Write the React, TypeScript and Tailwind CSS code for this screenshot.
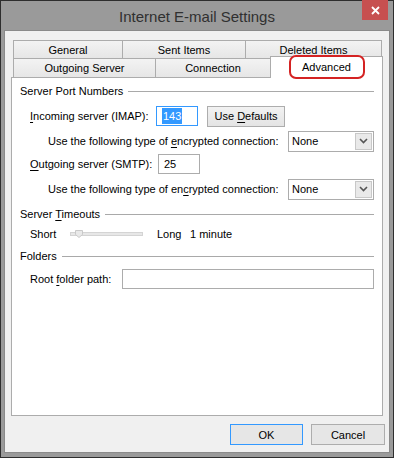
import React from "react";

function Section({ title, u, h }: { title: string; u?: [number, number]; h: string }) {
  return (
    <div className={`flex items-center pl-[8px] pr-[8px] ${h}`}>
      <span className="whitespace-nowrap">{renderU(title, u)}</span>
      <div className="flex-1 h-px bg-[#a9a9a9] ml-[5px]" />
    </div>
  );
}

function renderU(text: string, u?: [number, number]) {
  if (!u) return text;
  const [a, b] = u;
  return (
    <>
      {text.slice(0, a)}
      <span className="underline underline-offset-2">{text.slice(a, b)}</span>
      {text.slice(b)}
    </>
  );
}

function Select() {
  return (
    <div className="w-[86px] h-[21px] border border-[#acacac] bg-white flex items-center">
      <span className="pl-[3px] flex-1">None</span>
      <div className="w-[17px] h-[17px] mr-[1px] border border-[#c8c8c8] bg-[#e9e9e9] flex items-center justify-center">
        <svg width="9" height="6" viewBox="0 0 9 6">
          <path d="M1 1 L4.5 4.5 L8 1" stroke="#555" strokeWidth="1.6" fill="none" />
        </svg>
      </div>
    </div>
  );
}

function Tab({ label, w, extra = "" }: { label: string; w: string; extra?: string }) {
  return (
    <div
      className={`${w} h-full border-t border-l border-r border-[#acacac] bg-gradient-to-b from-[#f3f3f3] to-[#e6e6e6] flex items-center justify-center ${extra}`}
    >
      {label}
    </div>
  );
}

export default function App() {
  return (
    <div className="w-[394px] h-[458px] bg-[#9a9a9a] border border-[#2e2e2e] px-[3px] pb-[4px] flex flex-col font-['Liberation_Sans',Arial,sans-serif] text-[11px] leading-[16px] text-black">
      <div className="h-[29px] relative flex items-center justify-center text-[15px] text-[#303030] shrink-0">
        <span className="mt-[2px]">Internet E-mail Settings</span>
        <div className="absolute right-[2px] top-[-1px] w-[26px] h-[20px] bg-[#c75050] flex items-center justify-center">
          <svg width="9" height="9" viewBox="0 0 9 9">
            <path d="M1 1 L8 8 M8 1 L1 8" stroke="#fff" strokeWidth="1.8" />
          </svg>
        </div>
      </div>
      <div className="flex-1 bg-[#f0f0f0] border border-[#8a8a8a] flex flex-col">
        <div className="ml-[6px] mt-[9px] w-[372px]">
          <div className="flex pl-[2px] h-[18px]">
            <Tab label="General" w="w-[110px]" />
            <Tab label="Sent Items" w="w-[124px]" extra="-ml-px" />
            <Tab label="Deleted Items" w="w-[137px]" extra="-ml-px" />
          </div>
          <div className="flex items-end pl-[2px] h-[19px]">
            <Tab label="Outgoing Server" w="w-[143px]" extra="border-b-0" />
            <Tab label="Connection" w="w-[116px]" extra="-ml-px" />
            <div className="-ml-px w-[113px] h-[22px] -mb-px relative z-10 bg-white border-t border-l border-r border-[#acacac] flex items-center justify-center">
              <span className="-mt-[2px]">Advanced</span>
              <div className="absolute left-[18px] top-[-2px] w-[76px] h-[24px] border-2 border-[#d42323] rounded-[7px]" />
            </div>
          </div>
          <div className="w-[372px] h-[339px] border border-[#acacac] bg-white flex flex-col pt-px">
            <Section title="Server Port Numbers" h="h-[24px]" />
            <div className="h-[26px] flex items-center pl-[18px]">
              <span className="w-[126px] whitespace-nowrap">{renderU("Incoming server (IMAP):", [0, 1])}</span>
              <div className="w-[42px] h-[20px] border border-[#3399ff] flex items-center pl-[5px]">
                <span className="bg-[#3399ff] text-white px-px">143</span>
              </div>
              <div className="ml-[9px] w-[78px] h-[21px] border border-[#adadad] bg-gradient-to-b from-[#f2f2f2] to-[#e4e4e4] flex items-center justify-center">
                <span className="whitespace-nowrap">{renderU("Use Defaults", [4, 5])}</span>
              </div>
            </div>
            <div className="h-[24px] flex items-center pl-[36px]">
              <span className="w-[240px] whitespace-nowrap">{renderU("Use the following type of encrypted connection:", [26, 27])}</span>
              <Select />
            </div>
            <div className="h-[22px] flex items-center pl-[18px]">
              <span className="w-[128px] whitespace-nowrap">{renderU("Outgoing server (SMTP):", [0, 1])}</span>
              <div className="w-[42px] h-[20px] border border-[#acacac] flex items-center pl-[5px]">25</div>
            </div>
            <div className="h-[28px] flex items-center pl-[36px]">
              <span className="w-[240px] whitespace-nowrap">{renderU("Use the following type of encrypted connection:", [28, 29])}</span>
              <Select />
            </div>
            <Section title="Server Timeouts" u={[7, 8]} h="h-[22px]" />
            <div className="h-[18px] flex items-center pl-[18px]">
              <span className="w-[40px]">Short</span>
              <div className="relative w-[73px] h-[12px] flex items-center">
                <div className="w-full h-[4px] bg-[#e7e7e7] border border-[#d4d4d4]" />
                <svg className="absolute left-[5px] top-[2px]" width="8" height="8" viewBox="0 0 8 8">
                  <path d="M0.5 0.5 H7.5 V4.5 L4 7.5 L0.5 4.5 Z" fill="#e9e9e9" stroke="#c9c9c9" />
                </svg>
              </div>
              <span className="ml-[14px] w-[33px]">Long</span>
              <span>1 minute</span>
            </div>
            <Section title="Folders" h="h-[26px]" />
            <div className="h-[20px] flex items-center pl-[18px] pr-[8px]">
              <span className="w-[92px] whitespace-nowrap">{renderU("Root folder path:", [5, 6])}</span>
              <div className="flex-1 h-[20px] border border-[#acacac]" />
            </div>
          </div>
        </div>
        <div className="flex justify-end mt-[8px] mr-[4px]">
          <div className="w-[73px] h-[21px] border border-[#3399ff] bg-[#e6e6e6] flex items-center justify-center">OK</div>
          <div className="ml-[8px] w-[74px] h-[21px] border border-[#adadad] bg-[#e6e6e6] flex items-center justify-center">Cancel</div>
        </div>
      </div>
    </div>
  );
}
